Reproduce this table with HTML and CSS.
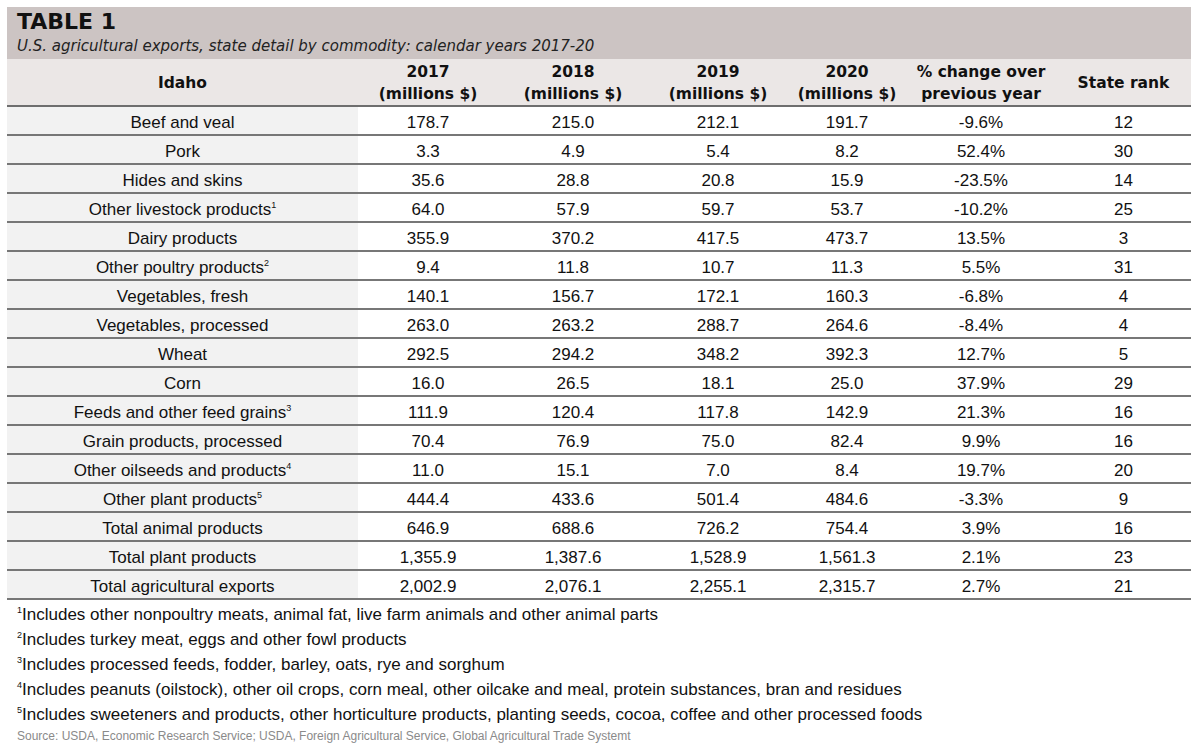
FILE: index.html
```html
<!DOCTYPE html>
<html lang="en">
<head>
  <meta charset="UTF-8">
  <title>Table 1 - U.S. agricultural exports, Idaho</title>
  <link rel="stylesheet" href="styles.css">
</head>
<body>
  <div class="wrap">
    <div class="title-band">
      <h1>TABLE 1</h1>
      <p class="subtitle">U.S. agricultural exports, state detail by commodity: calendar years 2017-20</p>
    </div>

    <table class="exports">
      <colgroup>
        <col class="c-name">
        <col class="c-2017">
        <col class="c-2018">
        <col class="c-2019">
        <col class="c-2020">
        <col class="c-pct">
        <col class="c-rank">
      </colgroup>
      <thead>
        <tr>
          <th>Idaho</th>
          <th>2017<br>(millions $)</th>
          <th>2018<br>(millions $)</th>
          <th>2019<br>(millions $)</th>
          <th>2020<br>(millions $)</th>
          <th>% change over<br>previous year</th>
          <th>State rank</th>
        </tr>
      </thead>
      <tbody>
        <tr><td>Beef and veal</td><td>178.7</td><td>215.0</td><td>212.1</td><td>191.7</td><td>-9.6%</td><td>12</td></tr>
        <tr><td>Pork</td><td>3.3</td><td>4.9</td><td>5.4</td><td>8.2</td><td>52.4%</td><td>30</td></tr>
        <tr><td>Hides and skins</td><td>35.6</td><td>28.8</td><td>20.8</td><td>15.9</td><td>-23.5%</td><td>14</td></tr>
        <tr><td>Other livestock products<sup>1</sup></td><td>64.0</td><td>57.9</td><td>59.7</td><td>53.7</td><td>-10.2%</td><td>25</td></tr>
        <tr><td>Dairy products</td><td>355.9</td><td>370.2</td><td>417.5</td><td>473.7</td><td>13.5%</td><td>3</td></tr>
        <tr><td>Other poultry products<sup>2</sup></td><td>9.4</td><td>11.8</td><td>10.7</td><td>11.3</td><td>5.5%</td><td>31</td></tr>
        <tr><td>Vegetables, fresh</td><td>140.1</td><td>156.7</td><td>172.1</td><td>160.3</td><td>-6.8%</td><td>4</td></tr>
        <tr><td>Vegetables, processed</td><td>263.0</td><td>263.2</td><td>288.7</td><td>264.6</td><td>-8.4%</td><td>4</td></tr>
        <tr><td>Wheat</td><td>292.5</td><td>294.2</td><td>348.2</td><td>392.3</td><td>12.7%</td><td>5</td></tr>
        <tr><td>Corn</td><td>16.0</td><td>26.5</td><td>18.1</td><td>25.0</td><td>37.9%</td><td>29</td></tr>
        <tr><td>Feeds and other feed grains<sup>3</sup></td><td>111.9</td><td>120.4</td><td>117.8</td><td>142.9</td><td>21.3%</td><td>16</td></tr>
        <tr><td>Grain products, processed</td><td>70.4</td><td>76.9</td><td>75.0</td><td>82.4</td><td>9.9%</td><td>16</td></tr>
        <tr><td>Other oilseeds and products<sup>4</sup></td><td>11.0</td><td>15.1</td><td>7.0</td><td>8.4</td><td>19.7%</td><td>20</td></tr>
        <tr><td>Other plant products<sup>5</sup></td><td>444.4</td><td>433.6</td><td>501.4</td><td>484.6</td><td>-3.3%</td><td>9</td></tr>
        <tr><td>Total animal products</td><td>646.9</td><td>688.6</td><td>726.2</td><td>754.4</td><td>3.9%</td><td>16</td></tr>
        <tr><td>Total plant products</td><td>1,355.9</td><td>1,387.6</td><td>1,528.9</td><td>1,561.3</td><td>2.1%</td><td>23</td></tr>
        <tr><td>Total agricultural exports</td><td>2,002.9</td><td>2,076.1</td><td>2,255.1</td><td>2,315.7</td><td>2.7%</td><td>21</td></tr>
      </tbody>
    </table>

    <div class="notes">
      <p><sup>1</sup>Includes other nonpoultry meats, animal fat, live farm animals and other animal parts</p>
      <p><sup>2</sup>Includes turkey meat, eggs and other fowl products</p>
      <p><sup>3</sup>Includes processed feeds, fodder, barley, oats, rye and sorghum</p>
      <p><sup>4</sup>Includes peanuts (oilstock), other oil crops, corn meal, other oilcake and meal, protein substances, bran and residues</p>
      <p><sup>5</sup>Includes sweeteners and products, other horticulture products, planting seeds, cocoa, coffee and other processed foods</p>
      <p class="source">Source: USDA, Economic Research Service; USDA, Foreign Agricultural Service, Global Agricultural Trade Systemt</p>
    </div>
  </div>
</body>
</html>
```

FILE: styles.css
```css
body {
  margin: 0;
  padding: 7px 8px 0 7px;
  background: #ffffff;
  color: #111;
  font-family: "Liberation Sans", Arial, sans-serif;
}
.wrap {
  width: 1184px;
}
.title-band {
  background: #ccc4c3;
  height: 52px;
  padding: 0 10px;
  box-sizing: border-box;
}
.title-band h1 {
  margin: 0;
  padding-top: 2px;
  font-family: "DejaVu Sans", sans-serif;
  font-size: 22px;
  line-height: 26px;
  font-weight: bold;
  color: #111;
}
.subtitle {
  margin: 0;
  padding-top: 1px;
  font-family: "DejaVu Sans", sans-serif;
  font-style: italic;
  font-size: 15px;
  line-height: 20px;
  color: #222;
}
.exports {
  width: 100%;
  border-collapse: collapse;
  table-layout: fixed;
}
.c-name { width: 351px; }
.c-2017 { width: 140px; }
.c-2018 { width: 150px; }
.c-2019 { width: 140px; }
.c-2020 { width: 118px; }
.c-pct { width: 150px; }
.c-rank { width: 135px; }

.exports th {
  background: #ebe7e6;
  height: 44px;
  padding: 2px 0 0;
  font-family: "DejaVu Sans", sans-serif;
  font-size: 15.5px;
  line-height: 22px;
  font-weight: bold;
  color: #111;
  border-bottom: 2px solid #6e6e6e;
}
.exports td {
  height: 22px;
  padding: 5px 0 0;
  text-align: center;
  font-size: 17px;
  line-height: 22px;
  border-bottom: 2px solid #777;
}
.exports td:first-child {
  background: #f2f2f2;
}
.exports sup, .notes sup {
  font-size: 9px;
  line-height: 0;
  vertical-align: 7px;
}
.notes {
  padding-top: 2px;
}
.notes p {
  margin: 0;
  padding-left: 10px;
  font-size: 17px;
  line-height: 25px;
  color: #111;
}
.notes .source {
  margin-top: 0;
  font-size: 12px;
  line-height: 18px;
  color: #8a8a8a;
}
```
